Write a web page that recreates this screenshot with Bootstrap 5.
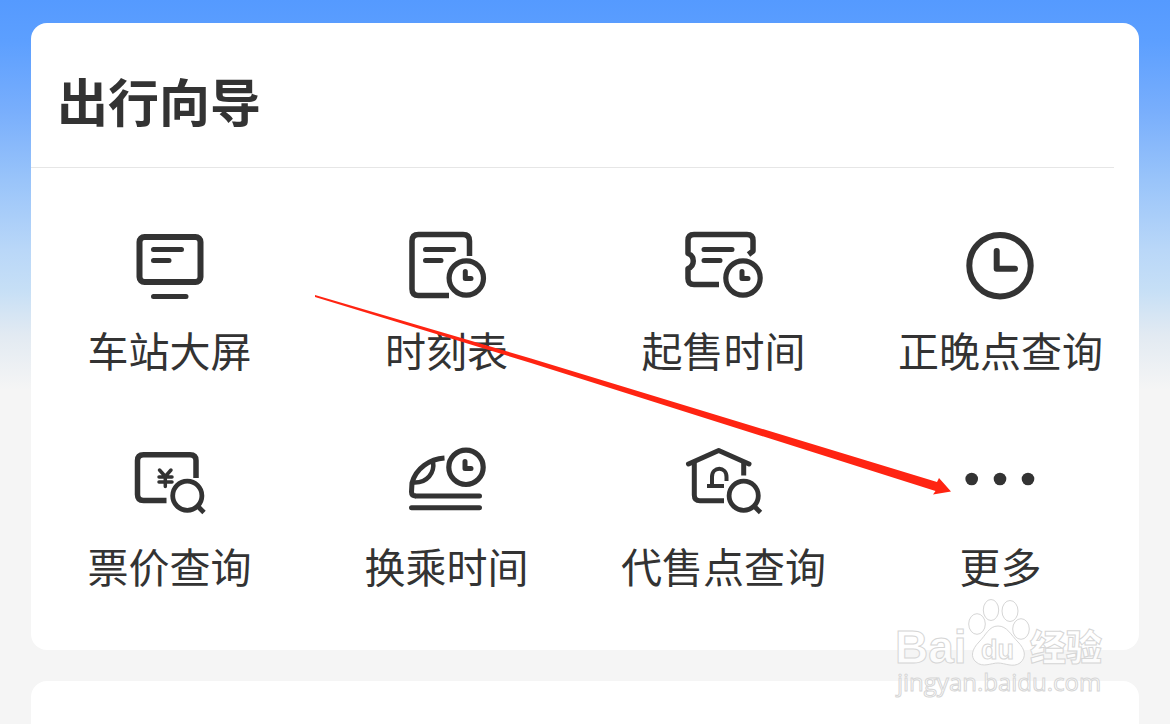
<!DOCTYPE html>
<html lang="zh-CN">
<head>
<meta charset="utf-8">
<meta name="viewport" content="width=device-width, initial-scale=1">
<title>出行向导</title>
<link href="https://cdn.jsdelivr.net/npm/bootstrap@5.3.0/dist/css/bootstrap.min.css" rel="stylesheet">
<style>
  body {
    font-family: "Noto Sans CJK SC", sans-serif;
    color: #333;
    background: #f5f5f5 linear-gradient(#559aff 0, #5c9fff 40px, #78aefc 110px, #99c4fa 180px, #b9d7f8 250px, #c6dff6 290px, #e2eaf2 335px, #f5f5f5 390px) no-repeat;
  }
  .page { padding: 23px 31px 0; min-height: 100vh; }
  .panel { background: #fff; border: 0; border-radius: 16px; }
  .panel-title { font-size: 51px; line-height: 72px; font-weight: 700; padding: 41px 26px 31px; margin: 0; }
  .rule { height: 1px; background: #e6e6e6; margin-right: 25px; }
  .guide { padding: 57px 0 55px; row-gap: 62px; }
  .entry { color: #333; text-decoration: none; font-size: 41px; line-height: 60px; white-space: nowrap; gap: 14px; }
  .entry svg { width: 100px; height: 80px; fill: none; stroke: #333; stroke-width: 6; stroke-linecap: round; stroke-linejoin: round; }
  .entry svg .thin { stroke-width: 5; }
  .entry svg .cut { stroke-linecap: butt; }
  .entry svg .dots { fill: #333; stroke: none; }
  .arrow { left: 0; top: 0; pointer-events: none; }
  .next-panel { margin-top: 31px; border-radius: 16px 16px 0 0; }
  .watermark { right: 60px; top: 590px; pointer-events: none; fill: #fff; fill-opacity: .8; stroke: #d6d6d6; stroke-width: 1; }
</style>
</head>
<body>
<main class="page position-relative d-flex flex-column">
  <section class="panel card">
    <h1 class="panel-title">出行向导</h1>
    <div class="rule"></div>
    <nav class="guide row g-0 row-cols-4 text-center">
      <a href="#" class="entry col d-flex flex-column align-items-center">
        <svg viewBox="0 0 100 80" aria-hidden="true">
          <rect x="19.500" y="12" width="61" height="45" rx="5"/>
          <path class="thin" d="M33.500 24.500H61.500M33.500 35.500H49M33.500 71.500H66"/>
        </svg>
        <span>车站大屏</span>
      </a>
      <a href="#" class="entry col d-flex flex-column align-items-center">
        <svg viewBox="0 0 100 80" aria-hidden="true">
          <path class="cut" stroke-width="5.500" d="M72.500 31V16Q72.500 9.500 66 9.500H21.500Q15 9.500 15 16V64Q15 70.500 21.500 70.500H52"/>
          <path class="thin" d="M28.500 24.500H56.500M28.500 35.500H44M68.300 46.500V53.500H74"/>
          <circle cx="69.300" cy="53" r="17.200" stroke-width="5.200"/>
        </svg>
        <span>时刻表</span>
      </a>
      <a href="#" class="entry col d-flex flex-column align-items-center">
        <svg viewBox="0 0 100 80" aria-hidden="true">
          <path class="cut" stroke-width="5.500" d="M74.500 29.500L79 26V15.500Q79 9.500 73 9.500H20Q14 9.500 14 15.500V28.500C21 31 21 41 14 43.500V53.500Q14 59.500 20 59.500H45"/>
          <path class="thin" d="M30 24.500H58M30 35.500H46M68 46.500V53.500H74"/>
          <circle cx="69" cy="53" r="17.200" stroke-width="5.200"/>
        </svg>
        <span>起售时间</span>
      </a>
      <a href="#" class="entry col d-flex flex-column align-items-center">
        <svg viewBox="0 0 100 80" aria-hidden="true">
          <circle cx="49" cy="40.700" r="30.700"/>
          <path d="M45.700 26V43.700H64"/>
        </svg>
        <span>正晚点查询</span>
      </a>
      <a href="#" class="entry col d-flex flex-column align-items-center">
        <svg viewBox="0 0 100 80" aria-hidden="true">
          <path class="cut" stroke-width="5.500" d="M76 37V19.500Q76 13.700 70 13.700H23.500Q17.500 13.700 17.500 19.500V53.500Q17.500 59.500 23.500 59.500H46.500"/>
          <path stroke-width="3.500" d="M39.500 29L45.300 35.500L51 29M39 36H52M39 41H52M45.300 35V45.500"/>
          <circle cx="67.300" cy="54.700" r="14.600" stroke-width="4.800"/>
          <path class="cut" stroke-width="4.800" d="M77 64.500L84 71.500"/>
        </svg>
        <span>票价查询</span>
      </a>
      <a href="#" class="entry col d-flex flex-column align-items-center">
        <svg viewBox="0 0 100 80" aria-hidden="true">
          <path class="thin cut" d="M47.500 17C33 18 19 27 15 42L14.500 51Q14.500 55 19 55"/>
          <path class="thin" d="M19 55H82.500M14.500 66.700H82.500"/>
          <path stroke-width="4.500" d="M36 20.500C38 32 30 42 17 41.500"/>
          <circle cx="69" cy="26.300" r="17.200" stroke-width="5.200"/>
          <path class="thin" d="M68 20.500V27.500H74"/>
        </svg>
        <span>换乘时间</span>
      </a>
      <a href="#" class="entry col d-flex flex-column align-items-center">
        <svg viewBox="0 0 100 80" aria-hidden="true">
          <path class="thin" d="M14.500 23L44.700 9.500L75 23"/>
          <path class="thin cut" d="M20.300 22V54Q20.300 59.800 26 59.800H50M69.700 22V34.500"/>
          <path class="cut" stroke-width="4" d="M33 45H50M38 45V36C38 25 52.500 25 52.500 36V40"/>
          <circle cx="69.700" cy="54.700" r="14.600" stroke-width="4.800"/>
          <path class="cut" stroke-width="4.800" d="M79.500 64.500L86.500 71.500"/>
        </svg>
        <span>代售点查询</span>
      </a>
      <a href="#" class="entry col d-flex flex-column align-items-center">
        <svg viewBox="0 0 100 80" aria-hidden="true">
          <g class="dots"><circle cx="20.700" cy="38" r="6.300"/><circle cx="49" cy="38" r="6.300"/><circle cx="77" cy="38" r="6.300"/></g>
        </svg>
        <span>更多</span>
      </a>
    </nav>
    <svg class="arrow position-absolute w-100" viewBox="0 0 1108 627" aria-hidden="true">
      <path fill="#ff2412" d="M284 272L500 335.500L906 459L908 455L920 468.500L902 471.500L904.500 468L500 340L284 274Z"/>
    </svg>
  </section>
  <section class="panel next-panel flex-grow-1"></section>
  <svg class="watermark position-absolute" width="220" height="120" viewBox="0 0 220 120" role="img" aria-label="Baidu 经验">
    <text x="5" y="73" font-family="Liberation Sans, sans-serif" font-weight="700" font-size="46">Bai</text>
    <ellipse cx="87" cy="34" rx="8.300" ry="10.300"/>
    <ellipse cx="101" cy="20" rx="7.700" ry="10.500"/>
    <ellipse cx="120" cy="21" rx="8" ry="10.500"/>
    <ellipse cx="131" cy="39" rx="8.300" ry="10.300"/>
    <path d="M108 36C99 36 96 45 89 52C82 59 80 67 86 72C93 78 101 73 108 73S123 78 130 73C137 67 135 59 128 52C121 45 117 36 108 36Z"/>
    <text x="91" y="69" font-family="Liberation Sans, sans-serif" font-weight="700" font-size="27">du</text>
    <text x="140" y="71" font-family="Noto Sans CJK SC, sans-serif" font-weight="900" font-size="36">经验</text>
    <text x="7" y="101" font-family="Open Sans, sans-serif" font-size="24">jingyan.baidu.com</text>
  </svg>
</main>
<script src="https://cdn.jsdelivr.net/npm/bootstrap@5.3.0/dist/js/bootstrap.bundle.min.js"></script>
</body>
</html>
